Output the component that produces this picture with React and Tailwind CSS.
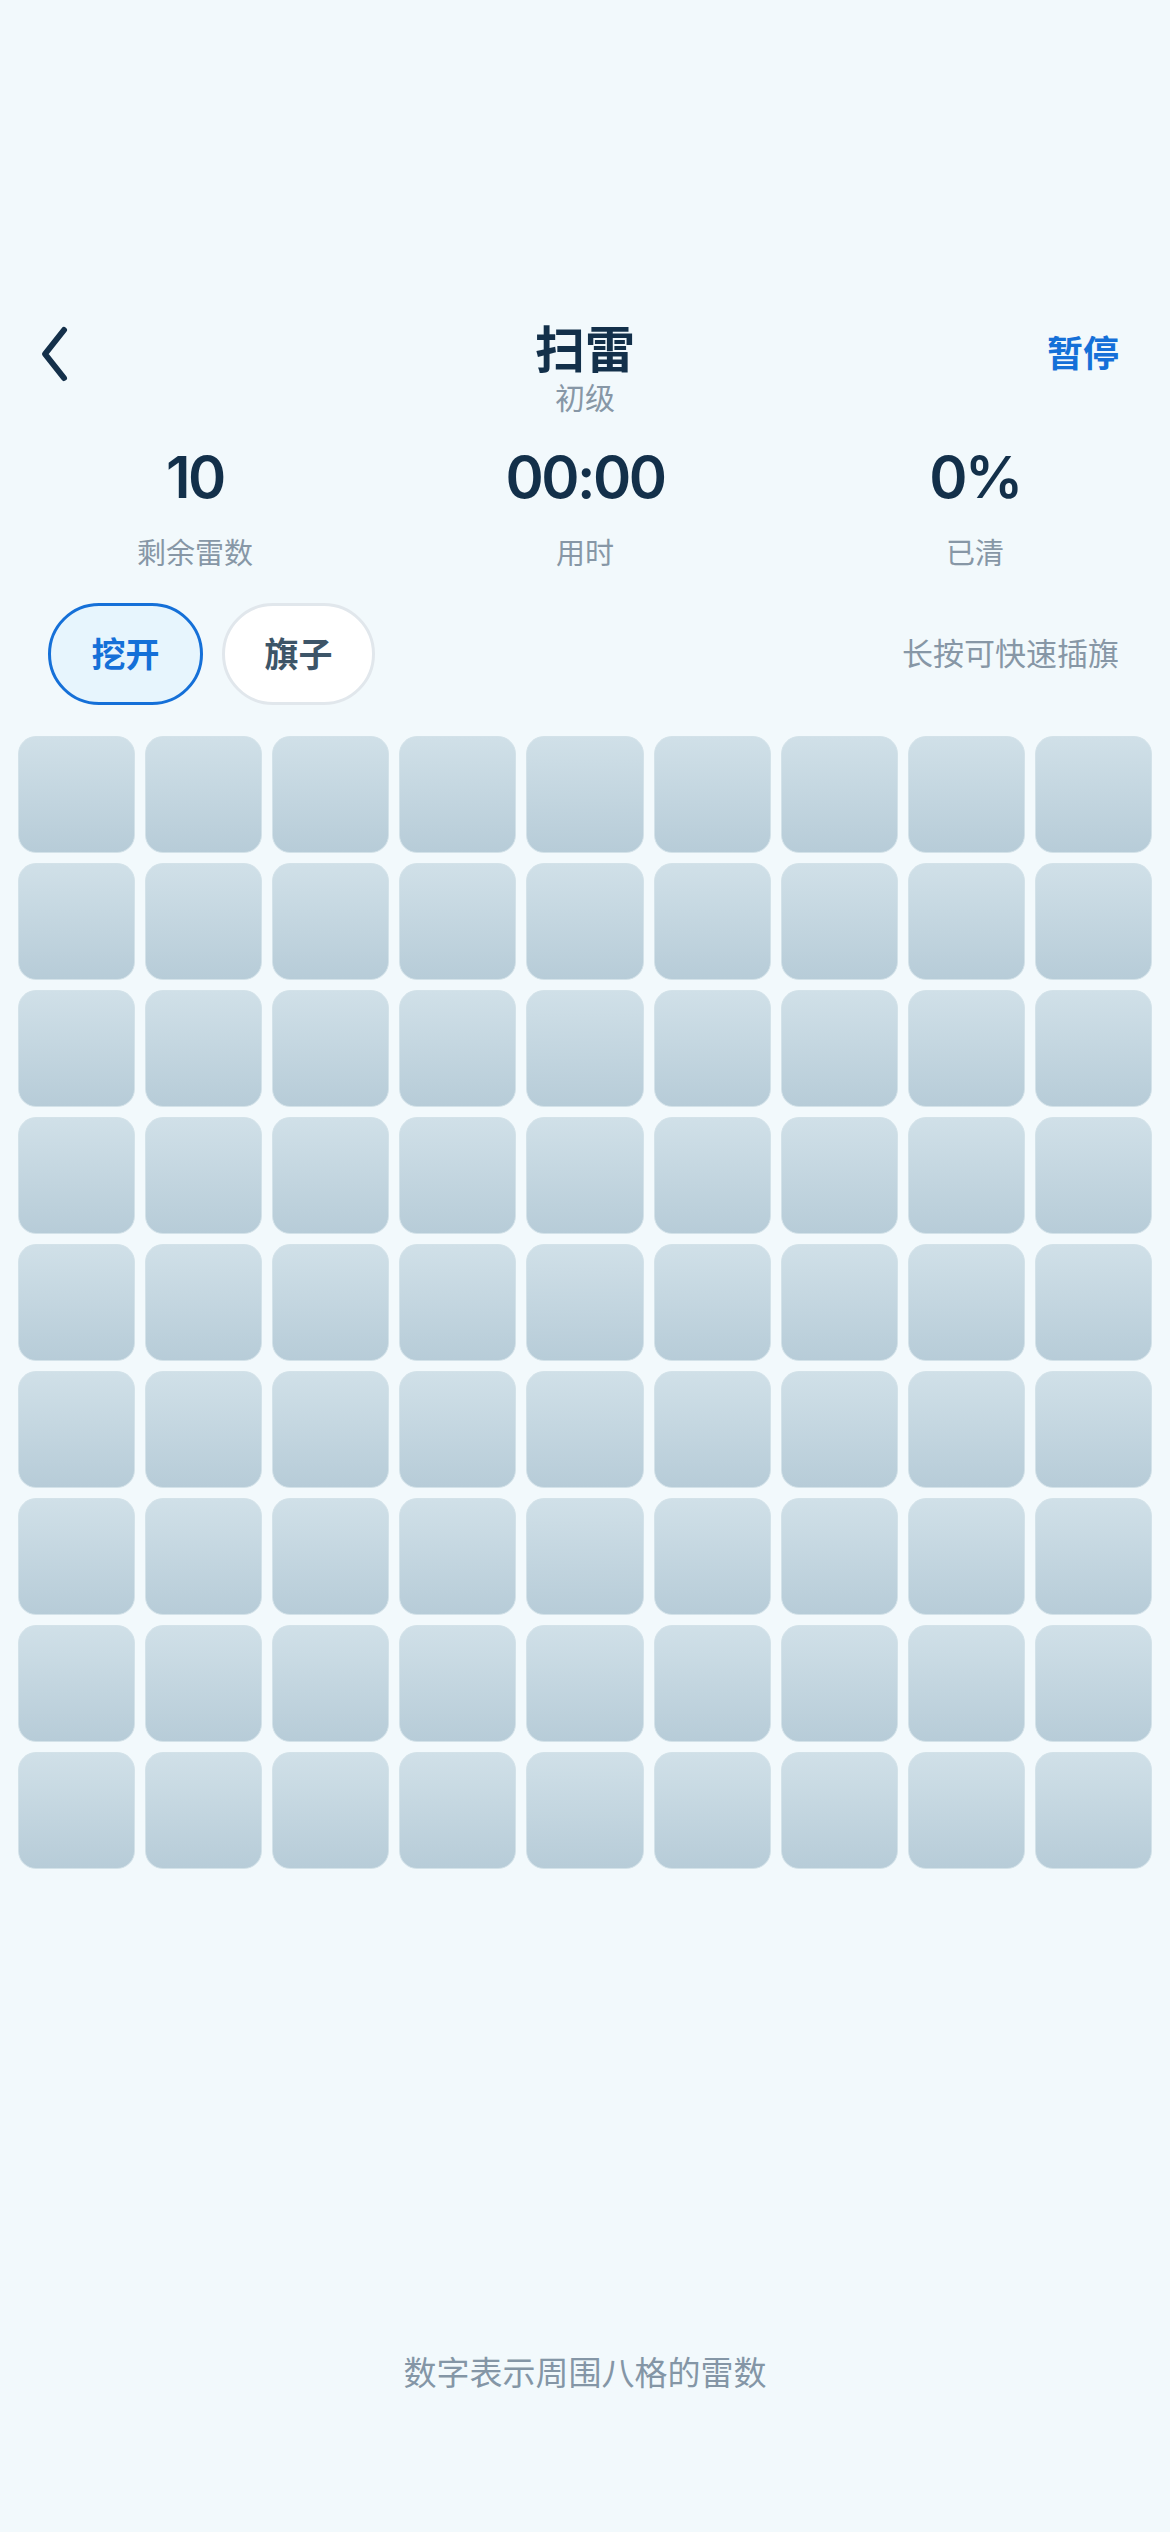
import React from "react";

const cells = Array.from({ length: 81 });

function Stat({ value, label }) {
  return (
    <div className="flex flex-col items-center">
      <p className="text-[58px] leading-[70px] font-semibold text-[#13304a] tracking-[-2.5px]">{value}</p>
      <p className="mt-[24px] text-[29px] leading-[36px] text-[#8797a6]">{label}</p>
    </div>
  );
}

export default function App() {
  return (
    <div
      className="w-[1170px] min-h-[2532px] bg-[#f2f9fc] flex flex-col"
      style={{ fontFamily: 'Inter, "Noto Sans CJK SC", "Noto Sans", sans-serif' }}
    >
      {/* header */}
      <div className="pt-[322px] grid grid-cols-3 items-start">
        <div className="pl-[36px] h-[64px] flex items-center">
          <button>
            <svg width="42" height="60" viewBox="0 0 42 60" fill="none">
              <path d="M28 6 L9 30 L28 54" stroke="#14304a" strokeWidth="6" strokeLinecap="round" strokeLinejoin="round" />
            </svg>
          </button>
        </div>
        <div className="flex flex-col items-center">
          <h1 className="text-[50px] leading-[57px] font-bold text-[#13304a]">扫雷</h1>
          <p className="text-[30px] leading-[38px] text-[#8797a6]">初级</p>
        </div>
        <div className="pr-[51px] h-[64px] flex items-center justify-end">
          <button className="text-[36px] font-bold text-[#1570d8]">暂停</button>
        </div>
      </div>

      {/* stats */}
      <div className="mt-[25px] grid grid-cols-3">
        <Stat value="10" label="剩余雷数" />
        <Stat value="00:00" label="用时" />
        <Stat value="0%" label="已清" />
      </div>

      {/* mode */}
      <div className="mt-[31px] pl-[48px] pr-[51px] flex items-center justify-between">
        <div className="flex items-center gap-[19px]">
          <button className="w-[155px] h-[102px] rounded-full border-[3px] border-[#1570d8] bg-[#e7f5fd] text-[34px] font-bold text-[#1570d8]">
            挖开
          </button>
          <button className="w-[153px] h-[102px] rounded-full border-[3px] border-[#e1e7ec] bg-white text-[34px] font-bold text-[#3d5568]">
            旗子
          </button>
        </div>
        <p className="text-[31px] text-[#8797a6]">长按可快速插旗</p>
      </div>

      {/* board */}
      <div className="mt-[31px] px-[18px] grid grid-cols-9 gap-[10px]">
        {cells.map((_, i) => (
          <div
            key={i}
            className="h-[117px] rounded-[18px] bg-linear-to-b from-[#d0e0e8] to-[#b7ccd8] border border-[#d3e2e9]"
          />
        ))}
      </div>

      <p className="mt-[484px] text-center text-[33px] leading-[40px] text-[#8496a6]">数字表示周围八格的雷数</p>
    </div>
  );
}
